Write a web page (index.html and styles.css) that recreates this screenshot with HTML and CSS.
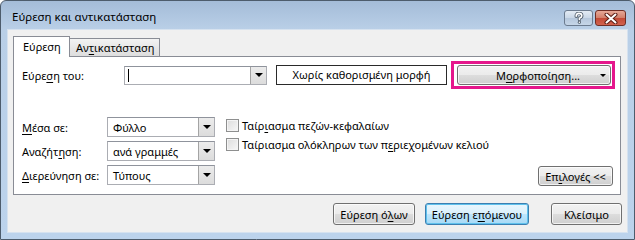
FILE: index.html
```html
<!DOCTYPE html>
<html lang="el">
<head>
  <meta charset="UTF-8" />
  <title>Εύρεση και αντικατάσταση</title>
  <link rel="stylesheet" href="styles.css">
</head>
<body>
  <div class="window">
    <div class="titlebar">
      <span class="caption">Εύρεση και αντικατάσταση</span>
      <div class="caption-buttons">
        <div class="cap-btn help">
          <svg width="12" height="12" viewBox="0 0 12 12">
            <path d="M3.2 4.2 Q3.2 1.4 6 1.4 Q8.8 1.4 8.8 3.8 Q8.8 5.4 6.4 6.2 V7.6" fill="none" stroke="#54616f" stroke-width="3.4" stroke-linecap="round"/>
            <path d="M3.2 4.2 Q3.2 1.4 6 1.4 Q8.8 1.4 8.8 3.8 Q8.8 5.4 6.4 6.2 V7.6" fill="none" stroke="#fff" stroke-width="1.6" stroke-linecap="round"/>
            <circle cx="6.4" cy="10.2" r="1.6" fill="#54616f"/>
            <circle cx="6.4" cy="10.2" r="0.8" fill="#fff"/>
          </svg>
        </div>
        <div class="cap-btn close">
          <svg width="14" height="11" viewBox="0 0 14 11">
            <path d="M2.5 1.5 L11.5 9.5 M11.5 1.5 L2.5 9.5" stroke="#5b1d14" stroke-width="4" stroke-linecap="round"/>
            <path d="M2.5 1.5 L11.5 9.5 M11.5 1.5 L2.5 9.5" stroke="#fff" stroke-width="2" stroke-linecap="round"/>
          </svg>
        </div>
      </div>
    </div>

    <div class="client">
      <div class="tabs">
        <div class="tab active">Εύρεση</div>
        <div class="tab">Αν<u>τ</u>ικατάσταση</div>
      </div>

      <div class="panel">
        <div class="find-row">
          <label class="field-label find-label">Εύρε<u>σ</u>η του:</label>
          <div class="combo find-combo">
            <span class="caret"></span>
            <span class="drop"></span>
          </div>
          <div class="format-preview">Χωρίς καθορισμένη μορφή</div>
          <div class="highlight">
            <div class="btn format-btn">
              <span class="format-text">Μ<u>ο</u>ρφοποίηση...</span>
              <span class="arrow"></span>
            </div>
          </div>
        </div>

        <div class="options">
          <div class="fields">
            <label class="field-label"><u>Μ</u>έσα σε:</label>
            <div class="combo"><span class="value">Φύλλο</span><span class="drop"></span></div>
            <label class="field-label">Αναζήτ<u>η</u>ση:</label>
            <div class="combo"><span class="value">ανά γραμμές</span><span class="drop"></span></div>
            <label class="field-label"><u>Δ</u>ιερεύνηση σε:</label>
            <div class="combo"><span class="value">Τύπους</span><span class="drop"></span></div>
          </div>

          <div class="checks">
            <div class="check"><span class="box"></span>Ταίρ<u>ι</u>ασμα πεζών-κεφαλαίων</div>
            <div class="check"><span class="box"></span>Ταίριασμα ολόκληρων των π<u>ε</u>ριεχομένων κελιού</div>
          </div>

          <div class="btn options-btn">Επ<u>ι</u>λογές &lt;&lt;</div>
        </div>
      </div>

      <div class="actions">
        <div class="btn find-all">Εύρεση ό<u>λ</u>ων</div>
        <div class="btn default find-next">Εύρεση ε<u>π</u>όμενου</div>
        <div class="btn close-btn">Κλείσιμο</div>
      </div>
    </div>
  </div>
</body>
</html>
```

FILE: styles.css
```css
body {
  margin: 0;
  background: #fff;
  font-family: 'Noto Sans', sans-serif;
  font-size: 11px;
  color: #111;
}

u {
  text-decoration-thickness: 1px;
  text-underline-offset: 2px;
}

.window {
  box-sizing: border-box;
  width: 635px;
  height: 240px;
  border: 1px solid #4d5c6c;
  border-radius: 6px 6px 0 0;
  background: linear-gradient(#a4bcd8, #b9cfe7 28px, #bcd3ec);
  display: flex;
  flex-direction: column;
}

.titlebar {
  height: 28px;
  display: flex;
  justify-content: space-between;
  align-items: flex-start;
  padding: 0 8px 0 11px;
}

.caption {
  margin-top: 8px;
  line-height: 16px;
  font-size: 11.5px;
  color: #000;
}

.caption-buttons {
  display: flex;
  gap: 2px;
  margin-top: 9px;
}

.cap-btn {
  height: 14px;
  border: 1px solid #6b7b8f;
  border-radius: 3px;
  display: flex;
  align-items: center;
  justify-content: center;
}

.help {
  width: 27px;
  background: linear-gradient(#e3ebf4, #c9d7e7 50%, #b5c7dc 51%, #c6d6e8);
}

.close {
  width: 29px;
  border-color: #6f2e25;
  background: linear-gradient(#e6a897, #d27e6a 50%, #c24a36 51%, #d2634f);
}

.client {
  flex: 1;
  margin: 0 6px 6px;
  border: 1px solid #d6e2ef;
  background: #f0f0f0;
  padding: 6px 6px 7px 5px;
  display: flex;
  flex-direction: column;
}

.tabs {
  display: flex;
  align-items: flex-end;
}

.tab {
  box-sizing: border-box;
  height: 18px;
  padding: 0 5px 0 6px;
  border: 1px solid #898c95;
  border-bottom: none;
  background: linear-gradient(#f3f3f3, #e7e7e7 50%, #dedede);
  line-height: 17px;
  color: #000;
}

.tab + .tab {
  border-left: none;
}

.tab.active {
  height: 21px;
  width: 57px;
  padding: 0 0 0 9px;
  margin-bottom: -1px;
  background: #fff;
  position: relative;
  z-index: 1;
  line-height: 19px;
}

.panel {
  box-sizing: border-box;
  height: 139px;
  border: 1px solid #898c95;
  background: #fff;
  padding: 4px 3px 8px 8px;
  display: flex;
  flex-direction: column;
}

.find-row {
  display: flex;
  align-items: center;
}

.field-label {
  color: #000;
}

.find-label {
  width: 102px;
}

.combo {
  box-sizing: border-box;
  height: 20px;
  border: 1px solid #abadb3;
  border-top-color: #8f939c;
  background: #fff;
  display: flex;
  align-items: center;
}

.find-combo {
  width: 143px;
  height: 19px;
}

.caret {
  width: 1px;
  height: 13px;
  margin-left: 3px;
  background: #000;
}

.value {
  padding-left: 5px;
  color: #000;
}

.drop {
  box-sizing: border-box;
  width: 16px;
  height: 100%;
  margin-left: auto;
  border-left: 1px solid #a4a4a4;
  background: linear-gradient(#ececec, #dcdcdc);
  display: flex;
  align-items: center;
  justify-content: center;
}

.drop::after {
  content: '';
  border-left: 4px solid transparent;
  border-right: 4px solid transparent;
  border-top: 4px solid #000;
}

.format-preview {
  box-sizing: border-box;
  width: 171px;
  height: 20px;
  margin-left: 9px;
  border: 1px solid #2a2a2a;
  text-align: center;
  line-height: 18px;
  color: #000;
}

.highlight {
  box-sizing: border-box;
  width: 164px;
  height: 28px;
  margin-left: 4px;
  border: 3px solid #e5178c;
  padding: 1px 1px 0 3px;
}

.btn {
  box-sizing: border-box;
  height: 20px;
  border: 1px solid #707070;
  border-radius: 3px;
  background: linear-gradient(#f2f2f2, #ebebeb 50%, #dddddd 51%, #cfcfcf);
  box-shadow: inset 0 0 0 1px rgba(255, 255, 255, 0.7);
  display: flex;
  align-items: center;
  justify-content: center;
  color: #000;
}

.format-btn {
  width: 154px;
}

.format-text {
  margin-left: auto;
  padding-left: 18px;
}

.arrow {
  margin-left: auto;
  margin-right: 4px;
  border-left: 3px solid transparent;
  border-right: 3px solid transparent;
  border-top: 3px solid #000;
}

.options {
  display: flex;
  margin-top: 28px;
  flex: 1;
}

.fields {
  display: grid;
  grid-template-columns: 85px 108px;
  grid-auto-rows: 20px;
  row-gap: 4px;
  align-items: center;
}

.checks {
  margin: 1px 0 0 11px;
  display: flex;
  flex-direction: column;
  gap: 5px;
}

.check {
  display: flex;
  align-items: center;
  height: 14px;
  color: #000;
}

.box {
  box-sizing: border-box;
  width: 13px;
  height: 13px;
  margin-right: 3px;
  border: 1px solid #8e8f8f;
  background: linear-gradient(135deg, #dcdcdc, #f7f7f7);
  box-shadow: inset 0 0 0 1px #f4f4f4;
}

.options-btn {
  width: 75px;
  margin: 0 4px 0 auto;
  align-self: flex-end;
}

.actions {
  display: flex;
  justify-content: flex-end;
  margin: 8px -1px 0 0;
}

.actions .btn {
  height: 22px;
}

.find-all {
  width: 82px;
}

.find-next {
  width: 104px;
  margin-left: 10px;
}

.close-btn {
  width: 71px;
  margin-left: 22px;
}

.btn.default {
  border-color: #3c7fb1;
  box-shadow: inset 0 0 0 1px #5fc1ec;
  background: linear-gradient(#eaf6fd, #d9f0fc 50%, #bee6fd 51%, #a7d9f5);
}
```
